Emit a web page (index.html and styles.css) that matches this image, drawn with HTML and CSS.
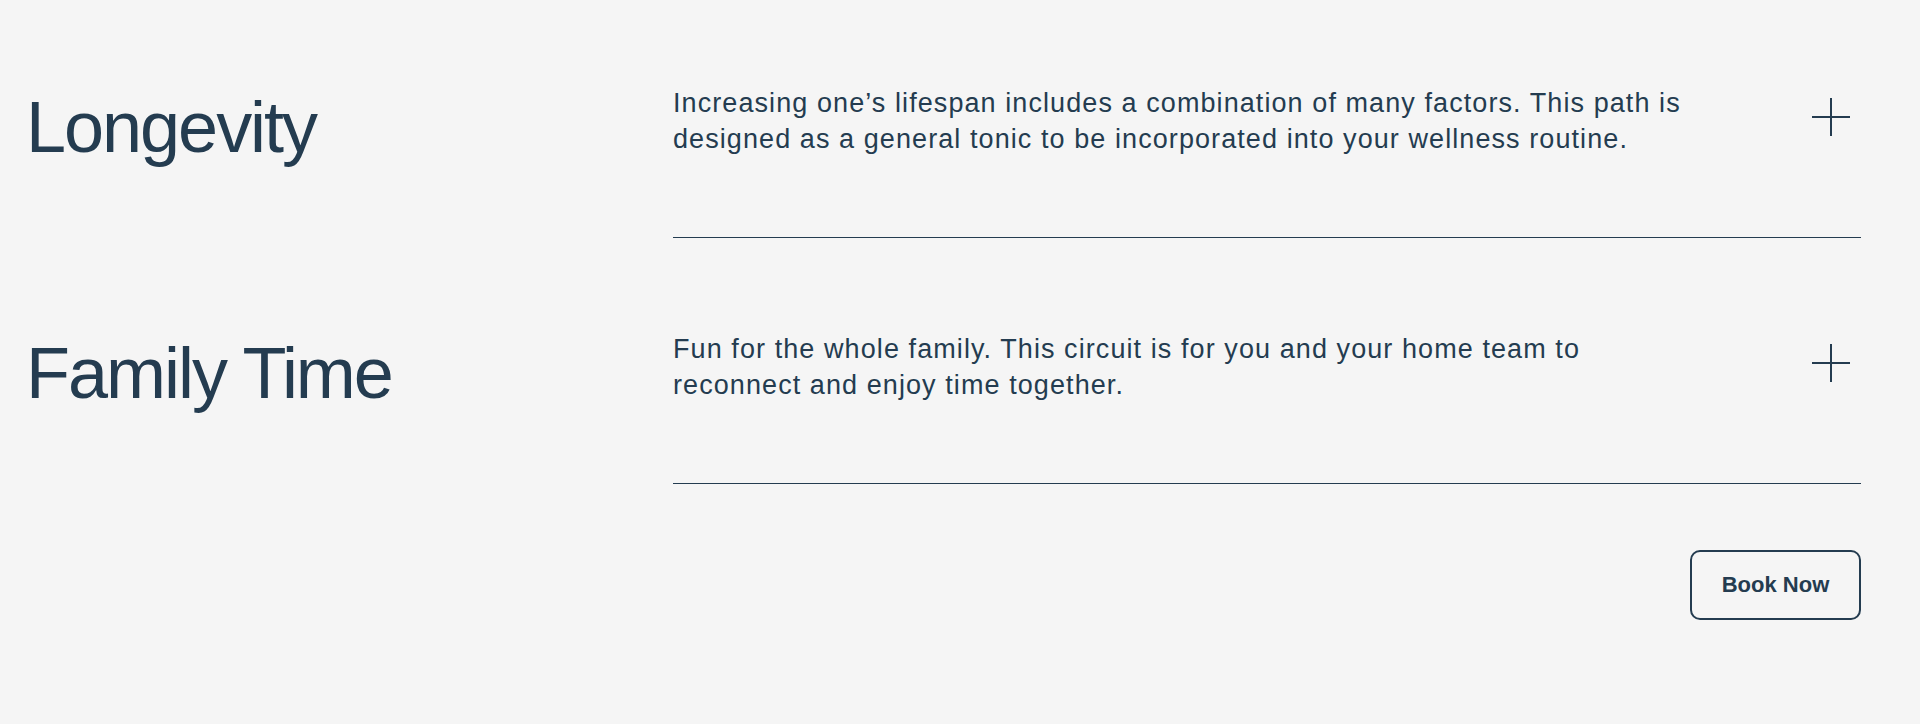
FILE: index.html
```html
<!DOCTYPE html>
<html lang="en">
<head>
    <meta charset="UTF-8">
    <meta name="viewport" content="width=device-width, initial-scale=1.0">
    <title>Wellness Paths</title>
    <link rel="stylesheet" href="styles.css">
</head>
<body>
    <section class="paths">
        <div class="path-row">
            <h2 class="path-title">Longevity</h2>
            <div class="path-body">
                <p class="path-text">Increasing one’s lifespan includes a combination of many factors. This path is designed as a general tonic to be incorporated into your wellness routine.</p>
                <button type="button" class="path-toggle" aria-label="Expand Longevity">
                    <svg width="38" height="38" viewBox="0 0 38 38" fill="none" stroke="currentColor" stroke-width="2">
                        <line x1="19" y1="0" x2="19" y2="38"/>
                        <line x1="0" y1="19" x2="38" y2="19"/>
                    </svg>
                </button>
            </div>
        </div>

        <div class="path-row">
            <h2 class="path-title">Family Time</h2>
            <div class="path-body">
                <p class="path-text">Fun for the whole family. This circuit is for you and your home team to reconnect and enjoy time together.</p>
                <button type="button" class="path-toggle" aria-label="Expand Family Time">
                    <svg width="38" height="38" viewBox="0 0 38 38" fill="none" stroke="currentColor" stroke-width="2">
                        <line x1="19" y1="0" x2="19" y2="38"/>
                        <line x1="0" y1="19" x2="38" y2="19"/>
                    </svg>
                </button>
            </div>
        </div>

        <div class="paths-footer">
            <button type="button" class="book-btn">Book Now</button>
        </div>
    </section>
</body>
</html>
```

FILE: styles.css
```css
body {
    margin: 0;
    font-family: 'Liberation Sans', Arial, Helvetica, sans-serif;
    background-color: #f5f5f5;
    color: #243c50;
}

.paths {
    padding: 85px 59px 0 26px;
    display: flex;
    flex-direction: column;
    gap: 93px;
}

.path-row {
    display: grid;
    grid-template-columns: 647px 1fr;
}

.path-title {
    margin: 0;
    font-size: 72px;
    font-weight: 400;
    line-height: 84px;
    letter-spacing: -0.028em;
}

.path-body {
    display: flex;
    justify-content: space-between;
    align-items: flex-start;
    padding-bottom: 80px;
    border-bottom: 1px solid #243c50;
}

.path-text {
    margin: 0;
    max-width: 1025px;
    font-size: 27px;
    line-height: 36px;
    letter-spacing: 0.04em;
}

.path-toggle {
    margin: 13px 11px 0 0;
    padding: 0;
    border: none;
    background: none;
    color: #243c50;
    cursor: pointer;
    display: flex;
}

.paths-footer {
    display: flex;
    justify-content: flex-end;
    margin-top: -27px;
}

.book-btn {
    width: 171px;
    height: 70px;
    border: 2px solid #243c50;
    border-radius: 10px;
    background: transparent;
    color: #243c50;
    font-family: inherit;
    font-size: 22px;
    font-weight: 700;
    cursor: pointer;
}
```
